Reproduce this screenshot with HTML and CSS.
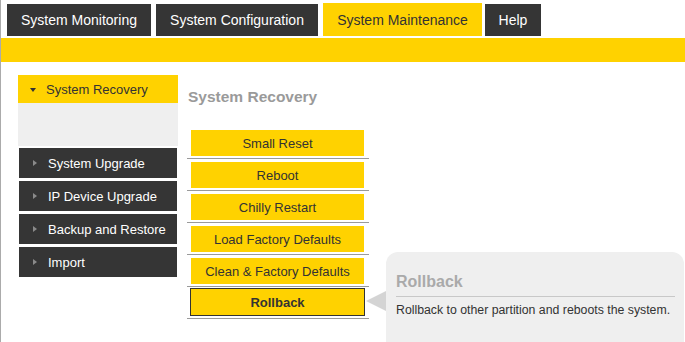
FILE: index.html
```html
<!DOCTYPE html>
<html lang="en">
<head>
<meta charset="utf-8">
<title>System Maintenance</title>
<link rel="stylesheet" href="styles.css">
</head>
<body>
<div class="page">
  <nav class="tabs">
    <a class="tab t1">System Monitoring</a>
    <a class="tab t2">System Configuration</a>
    <a class="tab t3 active">System Maintenance</a>
    <a class="tab t4">Help</a>
  </nav>
  <div class="bar"></div>
  <div class="main">
    <aside class="sidebar">
      <div class="side-item open"><span class="caret-down"></span>System Recovery</div>
      <div class="side-panel"></div>
      <div class="side-item dark first"><span class="caret-right"></span>System Upgrade</div>
      <div class="side-item dark"><span class="caret-right"></span>IP Device Upgrade</div>
      <div class="side-item dark"><span class="caret-right"></span>Backup and Restore</div>
      <div class="side-item dark"><span class="caret-right"></span>Import</div>
    </aside>
    <section class="content">
      <h2 class="heading">System Recovery</h2>
      <ul class="actions">
        <li class="row"><button class="btn">Small Reset</button></li>
        <li class="row"><button class="btn">Reboot</button></li>
        <li class="row"><button class="btn">Chilly Restart</button></li>
        <li class="row"><button class="btn">Load Factory Defaults</button></li>
        <li class="row"><button class="btn">Clean &amp; Factory Defaults</button></li>
        <li class="row"><button class="btn selected">Rollback</button></li>
      </ul>
      <div class="tooltip">
        <span class="arrow"></span>
        <div class="tip-title">Rollback</div>
        <p class="tip-text">Rollback to other partition and reboots the system.</p>
      </div>
    </section>
  </div>
</div>
</body>
</html>
```

FILE: styles.css
```css
html, body {
  margin: 0;
  padding: 0;
  background: #fff;
  overflow: hidden;
}
body {
  font-family: "Liberation Sans", Arial, sans-serif;
  color: #333;
}
.page {
  border-left: 1px solid #ababab;
  height: 342px;
  box-sizing: border-box;
  overflow: hidden;
}
.tabs {
  display: flex;
  align-items: flex-end;
  height: 36px;
  padding-left: 6px;
  margin-bottom: 2px;
}
.tab {
  display: flex;
  align-items: center;
  justify-content: center;
  height: 32px;
  background: #353535;
  color: #fff;
  font-size: 14px;
  margin-right: 5px;
  white-space: nowrap;
}
.t1 { width: 144px; }
.t2 { width: 162px; }
.t3 { width: 159px; margin-right: 3px; }
.t4 { width: 56px; }
.tab.active {
  background: #ffd200;
  color: #333;
  height: 33px;
}
.bar {
  height: 24px;
  background: #ffd200;
}
.main {
  display: flex;
  gap: 9px;
  padding: 13px 0 0 17px;
}
.sidebar {
  width: 160px;
  flex: none;
}
.side-item {
  display: flex;
  align-items: center;
  font-size: 13px;
  white-space: nowrap;
}
.side-item.open {
  height: 28px;
  background: #ffd200;
  color: #333;
  padding-left: 12px;
}
.caret-down {
  width: 0;
  height: 0;
  border-left: 3.5px solid transparent;
  border-right: 3.5px solid transparent;
  border-top: 4px solid #333;
  margin-right: 10px;
  margin-top: 1px;
}
.side-panel {
  height: 43px;
  background: #efefef;
}
.side-item.dark {
  height: 30px;
  margin: 3px 1px 0;
  background: #353535;
  color: #fff;
  padding-left: 14px;
}
.side-item.dark.first {
  margin-top: 2px;
}
.caret-right {
  width: 0;
  height: 0;
  border-top: 3.5px solid transparent;
  border-bottom: 3.5px solid transparent;
  border-left: 4px solid #8a8a8a;
  margin-right: 11px;
}
.content {
  position: relative;
  flex: 1;
}
.heading {
  margin: 12px 0 20px 1px;
  font-size: 15.5px;
  line-height: 20px;
  font-weight: bold;
  color: #9a9a9a;
}
.actions {
  list-style: none;
  margin: 0;
  padding: 0;
  width: 182px;
}
.row {
  padding: 3px 5px 2px 4px;
  border-bottom: 1px solid #9a9a9a;
}
.btn {
  display: block;
  width: 100%;
  height: 26px;
  margin: 0;
  padding: 0;
  border: 0;
  background: #ffd200;
  color: #333;
  font-family: "Liberation Sans", Arial, sans-serif;
  font-size: 13px;
  text-align: center;
}
.btn.selected {
  font-weight: bold;
  border: 1px solid #333;
  height: 28px;
  margin: -2px 0 0 -1px;
  width: calc(100% + 2px);
}
.tooltip {
  position: absolute;
  left: 199px;
  top: 177px;
  width: 298px;
  height: 90px;
  box-sizing: border-box;
  background: #efefef;
  border-radius: 12px 12px 0 0;
  padding: 20px 9px 0 10px;
}
.arrow {
  position: absolute;
  left: -20px;
  top: 39px;
  width: 0;
  height: 0;
  border-top: 10px solid transparent;
  border-bottom: 10px solid transparent;
  border-right: 20px solid #d4d4d4;
}
.tip-title {
  font-size: 16px;
  line-height: 20px;
  font-weight: bold;
  color: #aaa;
  padding-bottom: 4px;
  border-bottom: 1px solid #c8c8c8;
}
.tip-text {
  margin: 5px 0 0;
  font-size: 12.3px;
  line-height: 16px;
  color: #333;
}
```
